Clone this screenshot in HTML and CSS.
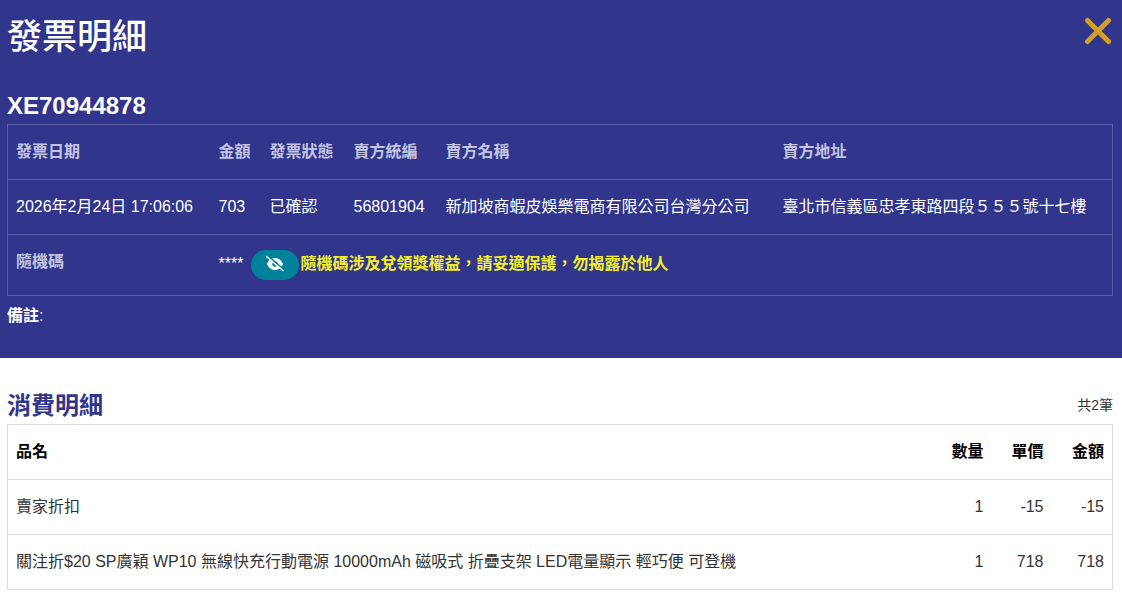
FILE: index.html
```html
<!DOCTYPE html>
<html lang="zh-Hant">
<head>
<meta charset="utf-8">
<title>發票明細</title>
<link rel="stylesheet" href="styles.css">
</head>
<body>
<section class="hero">
  <header class="hero-head">
    <h1 class="title">發票明細</h1>
    <svg class="close" width="28" height="28" viewBox="0 0 28 28" aria-label="關閉"><path d="M3.500 3.500 L24.500 24.500 M24.500 3.500 L3.500 24.500" stroke="#d49f24" stroke-width="5" stroke-linecap="round" fill="none"/></svg>
  </header>
  <h2 class="number">XE70944878</h2>
  <table class="info">
    <colgroup>
      <col class="c1"><col class="c2"><col class="c3"><col class="c4"><col class="c5"><col class="c6">
    </colgroup>
    <tr class="info-head">
      <th>發票日期</th><th>金額</th><th>發票狀態</th><th>賣方統編</th><th>賣方名稱</th><th>賣方地址</th>
    </tr>
    <tr>
      <td>2026年2月24日 17:06:06</td><td>703</td><td>已確認</td><td>56801904</td><td>新加坡商蝦皮娛樂電商有限公司台灣分公司</td><td>臺北市信義區忠孝東路四段５５５號十七樓</td>
    </tr>
    <tr class="random">
      <th>隨機碼</th>
      <td colspan="5"><div class="random-cell"><span class="stars">****</span><button class="eye" type="button" aria-label="顯示">
        <svg class="eye-icon" width="18" height="18" viewBox="0 0 18 18"><path fill="#fff" fill-rule="evenodd" d="M9 3c3.800 0 6.600 2.500 8 6-1.400 3.500-4.200 6-8 6S2.400 12.500 1 9C2.400 5.500 5.200 3 9 3zM9 6.300A2.700 2.700 0 1 0 9 11.700 2.700 2.700 0 0 0 9 6.300z"/><path d="M0 1 L17.500 16" stroke="#fff" stroke-width="1.600" fill="none"/><path d="M1.500 .2 L18.500 15" stroke="#00829b" stroke-width="1.300" fill="none"/></svg>
      </button><span class="warn">隨機碼涉及兌領獎權益，請妥適保護，勿揭露於他人</span></div></td>
    </tr>
  </table>
  <p class="note"><b>備註</b>:</p>
</section>
<section class="detail">
  <div class="detail-head">
    <h2 class="detail-title">消費明細</h2>
    <span class="count">共2筆</span>
  </div>
  <table class="items">
    <colgroup>
      <col class="i-name"><col class="i-qty"><col class="i-price"><col class="i-total">
    </colgroup>
    <tr class="items-head">
      <th class="left">品名</th><th>數量</th><th>單價</th><th>金額</th>
    </tr>
    <tr>
      <td class="left">賣家折扣</td><td>1</td><td>-15</td><td>-15</td>
    </tr>
    <tr>
      <td class="left">關注折$20 SP廣穎 WP10 無線快充行動電源 10000mAh 磁吸式 折疊支架 LED電量顯示 輕巧便 可登機</td><td>1</td><td>718</td><td>718</td>
    </tr>
  </table>
</section>
</body>
</html>
```
FILE: styles.css
```css
* { box-sizing: border-box; }
html, body { margin: 0; padding: 0; }
body {
  background: #fff;
  color: #333;
  font-family: "Liberation Sans", "Noto Sans CJK TC", sans-serif;
  font-size: 16px;
  overflow: hidden;
}
.hero {
  background: #31358c;
  color: #fff;
  height: 358px;
  padding: 0 9px 0 7px;
}
.hero-head {
  display: flex;
  justify-content: space-between;
  align-items: flex-start;
  height: 91px;
}
.title {
  margin: 14px 0 0 0;
  font-size: 35px;
  line-height: 46px;
  font-weight: 500;
}
.close { margin: 17px 1px 0 0; }
.number {
  margin: 0;
  font-size: 24px;
  line-height: 30px;
  height: 33px;
  font-weight: 700;
}
.info {
  width: 1106px;
  table-layout: fixed;
  border-collapse: collapse;
  border: 1px solid #5a5ea8;
}
.c1 { width: 203px; }
.c2 { width: 51px; }
.c3 { width: 84px; }
.c4 { width: 92px; }
.c5 { width: 337px; }
.info th, .info td {
  padding: 8px;
  height: 55px;
  text-align: left;
  vertical-align: middle;
  border-top: 1px solid #5a5ea8;
  font-size: 16px;
  line-height: 24px;
  white-space: nowrap;
  font-weight: 400;
}
.info th { color: #c3c4e0; font-weight: 700; }
.info td { color: #fff; }
.info .random th, .info .random td { vertical-align: top; height: 61px; padding-top: 15px; }
.random-cell { display: flex; align-items: center; height: 30px; }
.stars { width: 32px; margin-bottom: 3px; }
.eye {
  width: 48px;
  height: 30px;
  padding: 0;
  border: 0;
  border-radius: 15px;
  background: #00829b;
  display: flex;
  align-items: center;
  justify-content: center;
  margin-right: 2px;
}
.eye-icon { margin-bottom: 2px; }
.warn { color: #f2ef2c; font-weight: 700; margin-bottom: 3px; }
.note { margin: 9px 0 0 0; font-size: 16px; line-height: 22px; color: #e6e6f2; }
.note b { color: #fff; }
.detail { padding: 0 9px 0 7px; }
.detail-head {
  display: flex;
  justify-content: space-between;
  align-items: flex-end;
  height: 66px;
  padding-bottom: 3px;
}
.detail-title {
  margin: 0 0 -1px 0;
  font-size: 24px;
  line-height: 32px;
  color: #31358c;
  font-weight: 700;
}
.count { font-size: 14px; line-height: 32px; color: #333; }
.items {
  width: 1106px;
  table-layout: fixed;
  border-collapse: collapse;
  border: 1px solid #ddd;
}
.i-qty { width: 48px; }
.i-price { width: 60px; }
.i-total { width: 61px; }
.items th, .items td {
  padding: 8px;
  height: 55px;
  text-align: right;
  border-top: 1px solid #ddd;
  line-height: 24px;
  white-space: nowrap;
}
.items th { color: #000; font-weight: 700; }
.items td { color: #333; }
.items .left { text-align: left; }
```
